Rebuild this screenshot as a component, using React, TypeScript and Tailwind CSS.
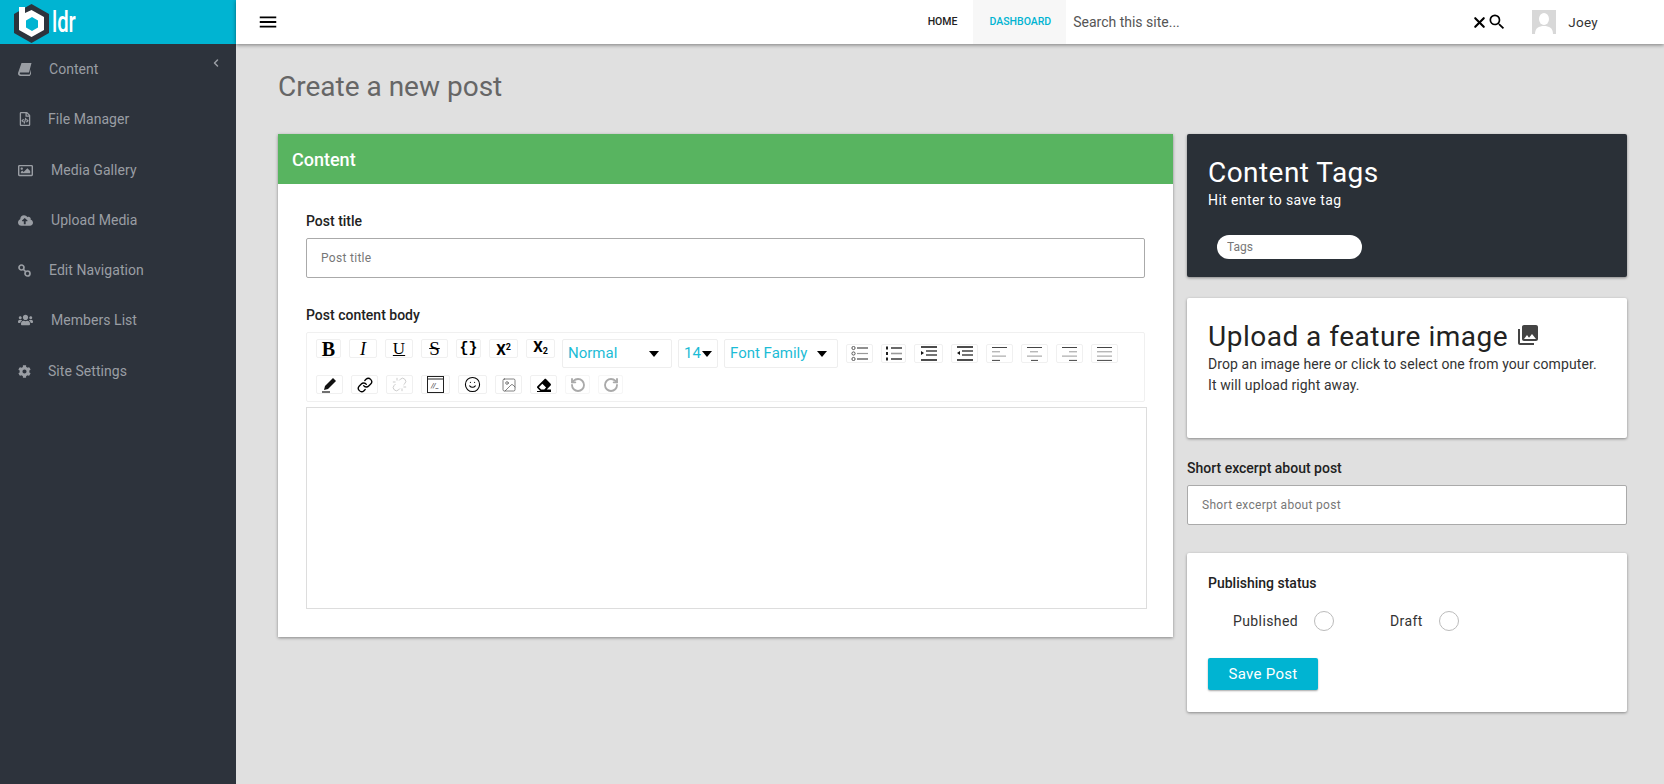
import React from 'react';
import {
  FaCloudUploadAlt,
  FaCog,
  FaEraser,
  FaRegFileCode,
  FaRegImage,
  FaUsers,
} from 'react-icons/fa';
import { MdMenu, MdPhotoLibrary, MdSearch } from 'react-icons/md';
import { ChevronLeft, Image, Link, RotateCcw, RotateCw, Smile, Unlink, X } from 'lucide-react';

const BookIcon = () => (
  <svg width="14" height="13" viewBox="0 0 14 13" fill="currentColor">
    <path d="M3.5 0H13.5L11 9.5H2.6C2 9.5 1.6 10 1.7 10.6C1.8 11.1 2.2 11.4 2.7 11.4H11.6L13 6.5V11L11.8 13H2.4C1.1 13 0 11.9 0 10.5C0 10.2 0 10 .1 9.7Z" />
  </svg>
);

const ChainIcon = () => (
  <svg width="13" height="13" viewBox="0 0 13 13" fill="none" stroke="currentColor" strokeWidth="1.7">
    <circle cx="3.5" cy="3.5" r="2.5" />
    <circle cx="9.5" cy="9.5" r="2.5" />
    <line x1="5" y1="5" x2="8" y2="8" />
  </svg>
);

const PenIcon = () => (
  <svg width="15" height="16" viewBox="0 0 15 16" fill="#111">
    <path d="M11 1L14 4L6 12L2 13L3 9Z" />
    <line x1="0" y1="15" x2="8" y2="15" stroke="#111" strokeWidth="1.2" />
  </svg>
);

const navItems = [
  { label: 'Content', icon: <BookIcon />, gap: 'ml-[16px]', row: 'h-[50px]' },
  { label: 'File Manager', icon: <FaRegFileCode size={14} />, gap: 'ml-[15px]', row: 'h-[50px]' },
  { label: 'Media Gallery', icon: <FaRegImage size={15} />, gap: 'ml-[18px]', row: 'h-[51px] pt-[1px]' },
  { label: 'Upload Media', icon: <FaCloudUploadAlt size={15} />, gap: 'ml-[18px]', row: 'h-[50px]' },
  { label: 'Edit Navigation', icon: <ChainIcon />, gap: 'ml-[16px]', row: 'h-[50px]' },
  { label: 'Members List', icon: <FaUsers size={16} />, gap: 'ml-[18px]', row: 'h-[50px]' },
  { label: 'Site Settings', icon: <FaCog size={13} />, gap: 'ml-[15px]', row: 'h-[51px] pt-[2px]' },
];

const Logo = () => (
  <div className="flex h-full items-center pl-[14px]">
    <svg width="35" height="39" viewBox="0 0 35 39" className="mt-[3px]">
      <polygon points="17.5,0 35,10 35,29 17.5,39 0,29 0,10" fill="#2d333c" />
      <polygon points="5,3 11,3 11,9 17.5,6 30,13 30,26 17.5,33 5,26" fill="#ffffff" />
      <polygon points="18,13 24,16.5 24,23.5 18,27 12,23.5 12,16.5" fill="#00b4d2" />
    </svg>
    <span className="ml-[3px] mt-[1px] origin-left scale-x-[0.7] text-[29px] font-medium leading-none text-white">ldr</span>
  </div>
);

const Sidebar = () => (
  <aside className="relative w-[236px] shrink-0 bg-[#2d333c] text-[#9a9ea4]">
    <div className="h-[44px] bg-[#00b4d2]">
      <Logo />
    </div>
    <ChevronLeft size={12} strokeWidth={3} className="absolute left-[210px] top-[57px]" />
    <nav>
      {navItems.map((item) => (
        <div key={item.label} className={`flex items-center pl-[18px] text-[14px] tracking-[0.05px] ${item.row}`}>
          <span className="flex w-[15px] justify-start">{item.icon}</span>
          <span className={item.gap}>{item.label}</span>
        </div>
      ))}
    </nav>
  </aside>
);

const Header = () => (
  <header className="relative z-10 flex h-[44px] items-center bg-white shadow-[0_1px_4px_rgba(0,0,0,0.45)]">
    <MdMenu size={22} className="ml-[21px] text-black" />
    <div className="ml-auto flex h-full items-center text-[10.5px] font-medium">
      <span className="px-[16px] text-[#222]">HOME</span>
      <span className="flex h-full items-center bg-[#f7f7f7] pl-[16px] pr-[15px] text-[#00b4d2]">DASHBOARD</span>
    </div>
    <span className="mb-[1px] ml-[7px] w-[398px] text-[14px] leading-[18px] text-[#555]">Search this site...</span>
    <X size={17} strokeWidth={3} className="text-black" />
    <MdSearch size={20} className="-ml-[1px] text-black" />
    <div className="ml-[25px] flex h-[24px] w-[24px] items-end justify-center overflow-hidden bg-[#d8d8d8]">
      <svg width="24" height="24" viewBox="0 0 24 24">
        <ellipse cx="12" cy="9" rx="5" ry="6" fill="#fff" />
        <path d="M3 24c0-6 4-8 9-8s9 2 9 8z" fill="#fff" />
      </svg>
    </div>
    <span className="ml-[12px] mr-[66px] text-[13.5px] tracking-[0.3px] text-[#333]">Joey</span>
  </header>
);

const Lines = ({ kind }: { kind: string }) => {
  const lines: Record<string, [number, number, string][]> = {
    left: [[1, 16, '#444'], [1, 9, '#999'], [1, 15, '#999'], [1, 9, '#444']],
    center: [[1, 16, '#444'], [4, 12, '#999'], [1, 16, '#999'], [5, 12, '#444']],
    right: [[1, 16, '#444'], [8, 16, '#999'], [1, 16, '#999'], [8, 16, '#444']],
    justify: [[1, 16, '#444'], [1, 16, '#999'], [1, 16, '#999'], [1, 16, '#444']],
  };
  return (
    <svg width="17" height="16" viewBox="0 0 17 16">
      {lines[kind].map(([a, b, c], i) => (
        <line key={i} x1={a} x2={b} y1={1.5 + i * 4.3} y2={1.5 + i * 4.3} stroke={c} strokeWidth="1" />
      ))}
    </svg>
  );
};

const Bullets = ({ ordered }: { ordered?: boolean }) => (
  <svg width="18" height="15" viewBox="0 0 18 15">
    {[2, 7.5, 13].map((y, i) => (
      <g key={y}>
        {ordered ? (
          <rect x="1" y={y - 1.5} width="2" height="3" fill="#222" />
        ) : (
          <circle cx="2.5" cy={y} r="1.6" fill="none" stroke="#555" />
        )}
        <line x1="6" x2="17" y1={y} y2={y} stroke={i === 1 ? '#999' : '#444'} strokeWidth={ordered ? 1.6 : 1.2} />
      </g>
    ))}
  </svg>
);

const Indent = ({ out }: { out?: boolean }) => (
  <svg width="18" height="15" viewBox="0 0 18 15">
    <line x1="1" x2="17" y1="1" y2="1" stroke="#111" strokeWidth="1.5" />
    <line x1="6" x2="17" y1="5" y2="5" stroke="#444" strokeWidth="1.5" />
    <line x1="6" x2="17" y1="9" y2="9" stroke="#444" strokeWidth="1.5" />
    <line x1="1" x2="17" y1="14" y2="14" stroke="#111" strokeWidth="1.5" />
    <polygon points={out ? '4,5 1,7 4,9' : '1,5 4,7 1,9'} fill="#111" />
  </svg>
);

const ToolButton = ({ w, className = '', children }: { w: string; className?: string; children: React.ReactNode }) => (
  <div className={`flex h-[19px] items-center justify-center rounded-[2px] border border-[#f0f0f0] bg-white text-black ${w} ${className}`}>
    {children}
  </div>
);

const Dropdown = ({ w, label, caret }: { w: string; label: string; caret: string }) => (
  <div className={`flex h-[29px] items-center rounded-[2px] border border-[#eeeeee] pl-[5px] text-[15px] text-[#1cbcd6] ${w}`}>
    <span>{label}</span>
    <span className={`${caret} h-0 w-0 border-x-[5.5px] border-t-[6px] border-x-transparent border-t-black`} />
  </div>
);

const Toolbar = () => (
  <div className="h-[70px] rounded-[2px] border border-[#f0f0f0] pl-[9px] pt-[6px]">
    <div className="flex items-start gap-x-[8px]">
      <ToolButton w="w-[25px]"><span className="font-['Liberation_Serif'] text-[20px] font-bold leading-none">B</span></ToolButton>
      <ToolButton w="w-[28px]"><span className="font-['Liberation_Serif'] text-[18px] italic leading-none">I</span></ToolButton>
      <ToolButton w="w-[28px]"><span className="font-['Liberation_Serif'] text-[17px] underline leading-none">U</span></ToolButton>
      <ToolButton w="w-[27px]"><span className="font-['Liberation_Serif'] text-[19px] line-through leading-none">S</span></ToolButton>
      <ToolButton w="w-[25px]"><span className="font-['Liberation_Mono'] text-[15px] font-bold leading-none">{'{}'}</span></ToolButton>
      <ToolButton w="w-[29px]"><span className="mt-[3px] text-[15px] font-bold leading-none">X<sup className="text-[9px]">2</sup></span></ToolButton>
      <ToolButton w="w-[29px]"><span className="-mt-[2px] text-[15px] font-bold leading-none">X<sub className="text-[9px]">2</sub></span></ToolButton>
      <Dropdown w="w-[110px] -ml-[1px]" label="Normal" caret="ml-[32px]" />
      <Dropdown w="w-[40px] -ml-[2px]" label="14" caret="ml-[1px]" />
      <Dropdown w="w-[114px] -ml-[2px]" label="Font Family" caret="ml-[10px]" />
      <ToolButton w="w-[27px]" className="mt-[5px]"><Bullets /></ToolButton>
      <ToolButton w="w-[25px]" className="mt-[5px]"><Bullets ordered /></ToolButton>
      <ToolButton w="w-[29px]" className="mt-[5px]"><Indent /></ToolButton>
      <ToolButton w="w-[27px]" className="mt-[5px]"><Indent out /></ToolButton>
      <ToolButton w="w-[27px]" className="mt-[5px]"><Lines kind="left" /></ToolButton>
      <ToolButton w="w-[27px]" className="mt-[5px]"><Lines kind="center" /></ToolButton>
      <ToolButton w="w-[27px]" className="mt-[5px]"><Lines kind="right" /></ToolButton>
      <ToolButton w="w-[27px]" className="mt-[5px]"><Lines kind="justify" /></ToolButton>
    </div>
    <div className="mt-[7px] flex gap-x-[8px]">
      <ToolButton w="w-[27px]"><PenIcon /></ToolButton>
      <ToolButton w="w-[27px]"><Link size={16} strokeWidth={2} /></ToolButton>
      <ToolButton w="w-[27px]"><Unlink size={15} strokeWidth={1.5} className="text-[#c8c8c8]" /></ToolButton>
      <ToolButton w="w-[29px]">
        <svg width="17" height="17" viewBox="0 0 17 17">
          <rect x="0.5" y="0.5" width="16" height="16" fill="none" stroke="#222" />
          <line x1="0" x2="17" y1="3" y2="3" stroke="#222" />
          <text x="4" y="12" fontSize="7" fontStyle="italic" fill="#222">//_</text>
        </svg>
      </ToolButton>
      <ToolButton w="w-[29px]"><Smile size={17} strokeWidth={1.5} /></ToolButton>
      <ToolButton w="w-[27px]"><Image size={16} strokeWidth={1} className="text-[#444]" /></ToolButton>
      <ToolButton w="w-[27px]"><span className="border-b border-black"><FaEraser size={14} className="-mb-[1px]" /></span></ToolButton>
      <ToolButton w="w-[25px]" className="border-[#f6f6f6]"><RotateCcw size={16} strokeWidth={2.8} className="text-[#aaa]" /></ToolButton>
      <ToolButton w="w-[25px]" className="border-[#f6f6f6]"><RotateCw size={16} strokeWidth={2.8} className="text-[#aaa]" /></ToolButton>
    </div>
  </div>
);

const cardShadow = 'shadow-[0_1px_3px_rgba(0,0,0,0.4)]';

const TextField = ({ placeholder }: { placeholder: string }) => (
  <input
    placeholder={placeholder}
    className="block h-[40px] w-full rounded-[2px] border border-[#aaaaaa] bg-white px-[14px] text-[12px] tracking-[0.3px] outline-none placeholder:text-[#777]"
  />
);

const ContentCard = () => (
  <section className={`h-[503px] w-[895px] bg-white ${cardShadow}`}>
    <div className="flex h-[50px] items-center bg-[#58b460] pl-[14px] text-[18px] font-medium text-white">Content</div>
    <div className="pl-[28px] pr-[28px]">
      <label className="mb-[8px] mt-[28px] block text-[14px] font-medium leading-[18px] text-[#222]">Post title</label>
      <TextField placeholder="Post title" />
      <label className="mb-[8px] mt-[28px] block text-[14px] font-medium leading-[18px] text-[#222]">Post content body</label>
      <Toolbar />
      <div className="-mr-[2px] mt-[5px] h-[202px] border border-[#dddddd]" />
    </div>
  </section>
);

const RadioOption = ({ label, w }: { label: string; w: string }) => (
  <label className={`flex items-center ${w}`}>
    <span className="mt-[2px] text-[14px] tracking-[0.4px] text-[#333]">{label}</span>
    <span className="ml-auto h-[20px] w-[20px] rounded-full border border-[#bbbbbb]" />
  </label>
);

const SideColumn = () => (
  <div className="w-[440px]">
    <section className={`h-[143px] rounded-[2px] bg-[#2a3037] pl-[21px] pt-[22px] ${cardShadow}`}>
      <h2 className="text-[28px] leading-[34px] tracking-[0.45px] text-white">Content Tags</h2>
      <p className="text-[14px] leading-[20px] tracking-[0.4px] text-white">Hit enter to save tag</p>
      <input
        placeholder="Tags"
        className="ml-[9px] mt-[25px] block h-[24px] w-[145px] rounded-full bg-white px-[10px] text-[12px] outline-none placeholder:text-[#777]"
      />
    </section>
    <section className={`mt-[21px] h-[140px] rounded-[2px] bg-white pl-[21px] pt-[22px] ${cardShadow}`}>
      <h2 className="flex items-center text-[28px] leading-[34px] tracking-[0.5px] text-[#222]">
        Upload a feature image
        <MdPhotoLibrary size={24} className="-mt-[4px] ml-[8px] text-[#444]" />
      </h2>
      <p className="text-[14px] leading-[21px] tracking-[0.1px] text-[#333]">
        Drop an image here or click to select one from your computer.
        <br />
        It will upload right away.
      </p>
    </section>
    <label className="mb-[8px] mt-[21px] block text-[14px] font-medium leading-[18px] text-[#222]">Short excerpt about post</label>
    <TextField placeholder="Short excerpt about post" />
    <section className={`mt-[28px] h-[159px] rounded-[2px] bg-white pl-[21px] pt-[21px] ${cardShadow}`}>
      <h3 className="text-[14px] font-medium leading-[18px] text-[#222]">Publishing status</h3>
      <div className="ml-[25px] mt-[17px] flex">
        <RadioOption label="Published" w="w-[101px]" />
        <div className="ml-[56px]">
          <RadioOption label="Draft" w="w-[69px]" />
        </div>
      </div>
      <button className="mt-[26px] h-[32px] w-[110px] rounded-[2px] bg-[#00b4d2] text-[15px] tracking-[0.3px] text-white shadow-[0_1px_2px_rgba(0,0,0,0.35)]">
        Save Post
      </button>
    </section>
  </div>
);

export default function App() {
  return (
    <div className="flex min-h-[784px] bg-[#e0e0e0] font-['Roboto',sans-serif]">
      <Sidebar />
      <div className="min-w-0 flex-1">
        <Header />
        <main className="pl-[42px]">
          <h1 className="pt-[23px] text-[28px] leading-[40px] text-[#666]">Create a new post</h1>
          <div className="mt-[27px] flex items-start gap-x-[14px]">
            <ContentCard />
            <SideColumn />
          </div>
        </main>
      </div>
    </div>
  );
}
